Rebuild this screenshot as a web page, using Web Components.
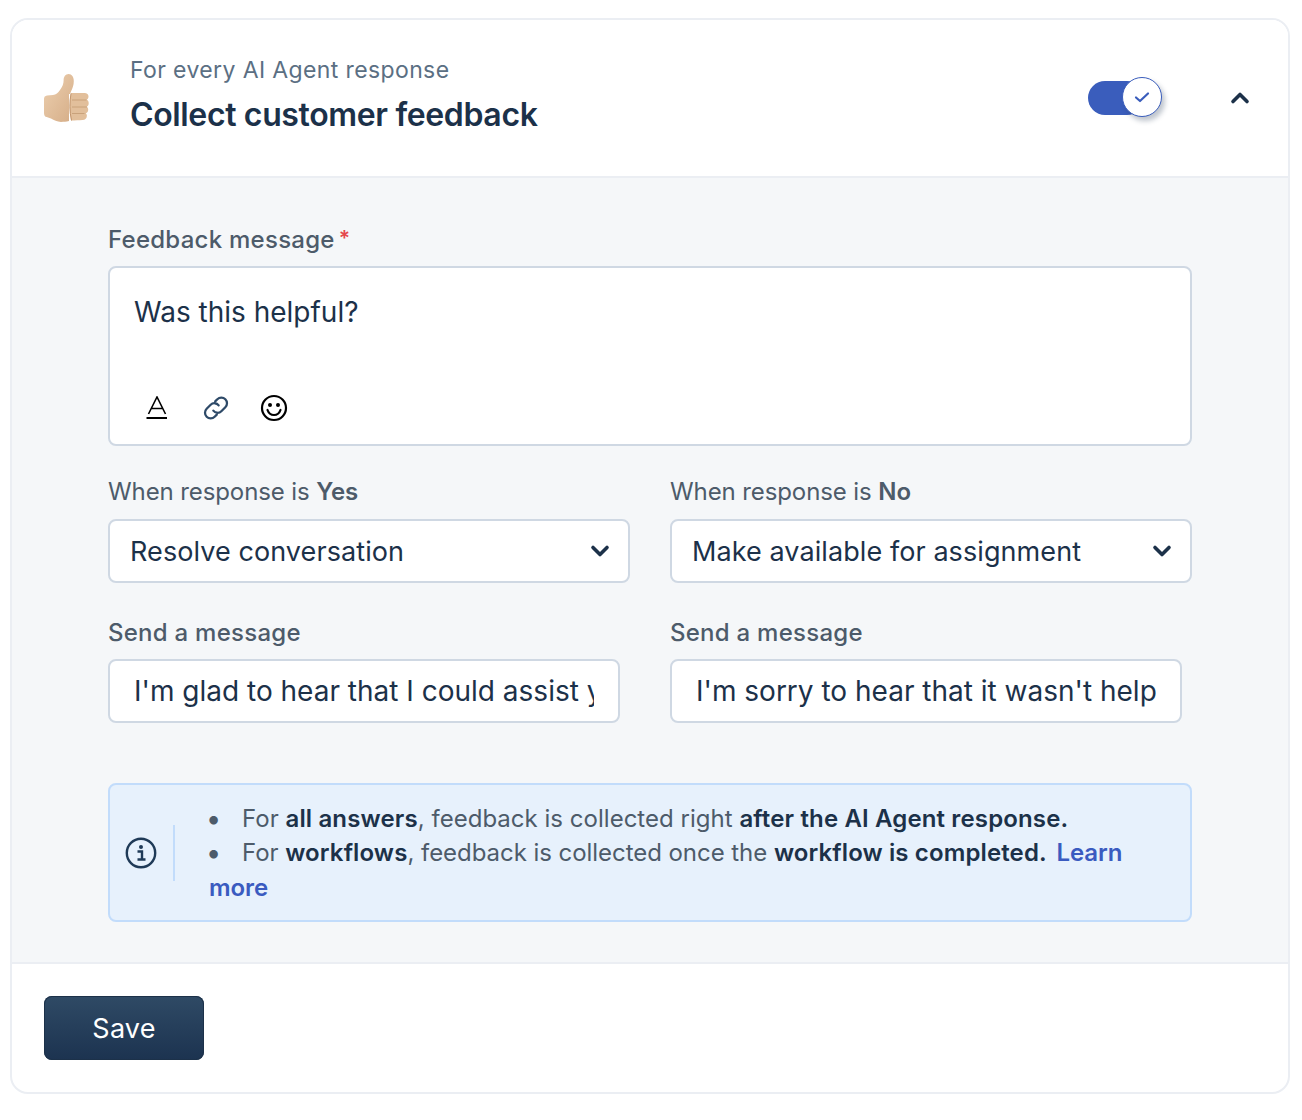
<!DOCTYPE html>
<html><head><meta charset="utf-8">
<style>
html,body{margin:0;padding:0;background:#fff}
body{padding:18px 12px 26px 10px;font-family:Inter,"Liberation Sans",sans-serif;color:#1c3149}
info-box li{display:block}
info-box li.w{letter-spacing:-.05px}
info-box li.w b{letter-spacing:.12px}
info-box li::before{content:"•";display:inline-block;width:36px;margin-left:-3px;color:#4d5b6a;font-size:27px;line-height:1;vertical-align:-1px}
info-box b{font-weight:600;color:#1c3149;letter-spacing:.14px}
info-box a{color:#3a5bc0;font-weight:600}
info-box a.l{margin-left:3px}
form-label b{font-weight:600}
</style></head><body>
<feedback-card>
  <card-header slot="header" sub="For every AI Agent response" title-text="Collect customer feedback"></card-header>

  <form-label required>Feedback message</form-label>
  <rich-box>Was this helpful?</rich-box>

  <two-col style="margin-top:29px">
    <div><form-label plain>When response is <b>Yes</b></form-label><select-box>Resolve conversation</select-box></div>
    <div><form-label plain>When response is <b>No</b></form-label><select-box>Make available for assignment</select-box></div>
  </two-col>
  <two-col style="margin-top:33px">
    <div><form-label tight>Send a message</form-label><text-box>I'm glad to hear that I could assist you.</text-box></div>
    <div><form-label tight>Send a message</form-label><text-box>I'm sorry to hear that it wasn't helpful.</text-box></div>
  </two-col>

  <info-box>
    <li>For <b>all answers</b>, feedback is collected right <b>after the AI Agent response.</b></li>
    <li class="w">For <b>workflows</b>, feedback is collected once the <b>workflow is completed.</b> <a class="l">Learn</a> <a>more</a></li>
  </info-box>

  <save-button slot="footer">Save</save-button>
</feedback-card>

<script>
function def(name, html){
  customElements.define(name, class extends HTMLElement{
    constructor(){super();this.attachShadow({mode:'open'}).innerHTML=typeof html==='function'?html(this):html;}
  });
}
def('feedback-card',`<style>
:host{display:block;width:1280px;box-sizing:border-box;border:2px solid #ebeef3;border-radius:18px;overflow:hidden;background:#fff}
.body{background:#f5f7f9;padding:44px 96px 40px 96px;height:784px;box-sizing:border-box}
.foot{border-top:2px solid #ebeef3;padding:32px}
</style><slot name="header"></slot><div class="body"><slot></slot></div><div class="foot"><slot name="footer"></slot></div>`);

customElements.define('card-header', class extends HTMLElement{
  connectedCallback(){
    if(this.shadowRoot) return;
    this.attachShadow({mode:'open'}).innerHTML=`<style>
:host{display:flex;align-items:center;height:156px;border-bottom:2px solid #ebeef3;box-sizing:content-box;background:#fff}
.thumb{width:48px;height:52px;margin-left:30px;flex:none;position:relative;top:1px}
.txt{margin-left:40px;flex:1;position:relative;top:-3px}
.sub{font-size:23px;line-height:34px;color:#5b6f83;letter-spacing:.38px}
.title{font-size:32px;line-height:44px;font-weight:600;color:#1c3149;margin-top:6px;letter-spacing:-.36px}
.sw{width:76px;height:40px;flex:none;position:relative;margin-right:65px;top:-1px}
.track{position:absolute;left:1px;top:4px;width:56px;height:34px;background:#3a5dbc;border-radius:17px}
.knob{position:absolute;left:35px;top:0;width:40px;height:40px;border-radius:50%;background:#fff;border:1.5px solid #3a5dbc;box-sizing:border-box;box-shadow:3px 4px 5px rgba(30,50,80,.28);display:flex;align-items:center;justify-content:center}
.chev{margin-right:36px;flex:none;display:flex}
</style>
<svg class="thumb" viewBox="0 0 48 52">
<defs><linearGradient id="g" x1="0" y1="0" x2="1" y2="1"><stop offset="0" stop-color="#edd0b0"/><stop offset="1" stop-color="#d5ad87"/></linearGradient></defs>
<path fill="url(#g)" d="M2 26c0-2 1-3.200 3-3.500l6-.6c3-.5 5-2 7-5 2.500-3.500 3.600-6.300 3.600-9.500 0-3.500 2-6.300 5-6.300 3.200 0 5.200 3 5.200 7 0 4-1.200 7.400-2.800 10.500l-1 2.500h-1v27c-3 .6-5 .8-8 .8-4 0-7-1.500-10-3.300-2-1-4-1.500-5.500-1.800C2.500 43 2 41.500 2 40z"/>
<path fill="#e2bf9b" d="M29 20h13.500c2.500 0 4 1.500 4 3.500 0 1.500-.7 2.700-1.800 3.300 1.300.6 2 1.800 2 3.400 0 1.700-.8 3-2 3.500 1 .7 1.500 1.800 1.500 3 0 1.700-1 3-2.300 3.500.7.700 1 1.500 1 2.500 0 2.400-1.700 4.300-4.400 4.300-3.500.3-7 .3-11.500.5-2-9-2-18 0-28z"/>
<path d="M30 27h14.500M30 34h15M30 40.500h12.500" stroke="#c9a27b" stroke-width="1" fill="none"/>
<path d="M29 20.500c-1.500 8-1.500 18 .5 27" stroke="#bd9068" stroke-width=".9" fill="none"/>
</svg>
<div class="txt"><div class="sub">${this.getAttribute('sub')}</div><div class="title">${this.getAttribute('title-text')}</div></div>
<div class="sw"><div class="track"></div><div class="knob"><svg width="16" height="16" viewBox="0 0 16 16"><path d="M2 8.500l4 3.500 8-7.500" fill="none" stroke="#3a5dbc" stroke-width="2.200" stroke-linecap="round" stroke-linejoin="round"/></svg></div></div>
<div class="chev"><svg width="24" height="24" viewBox="0 0 24 24"><path d="M5 15.500l7-7 7 7" fill="none" stroke="#1c3149" stroke-width="3.600" stroke-linecap="round" stroke-linejoin="round"/></svg></div>`;
  }
});

customElements.define('form-label', class extends HTMLElement{
  constructor(){super();
    const plain=this.hasAttribute('plain'), req=this.hasAttribute('required'), tight=this.hasAttribute('tight');
    this.attachShadow({mode:'open'}).innerHTML=`<style>
:host{display:block;font-size:24px;line-height:34px;height:34px;color:#4d5b6a;letter-spacing:${plain?'-.1px':'.26px'};font-weight:${plain?400:500};margin-bottom:${tight?9:10}px;white-space:nowrap}
.r{color:#e5484d;font-size:21px;margin-left:4px;font-weight:600;vertical-align:2px}
</style><slot></slot>${req?'<span class="r">*</span>':''}`;
  }
});

def('rich-box',`<style>
:host{display:block;height:180px;box-sizing:border-box;border:2px solid #cfd8e3;border-radius:8px;background:#fff;padding:26px 24px 0}
.t{font-size:28px;line-height:38px;color:#1c3149;height:76px;position:relative;top:-1px}
.tools{display:flex;align-items:center;gap:28px;margin:23px 0 0 11px;height:30px}
svg{display:block;flex:none}
</style><div class="t"><slot></slot></div>
<div class="tools">
<svg width="24" height="24" viewBox="0 0 24 24"><path d="M3.500 18L12 1l8.500 17M6.500 12.500h11" fill="none" stroke="#000" stroke-width="1.600"/><path d="M1.500 22H22" stroke="#000" stroke-width="2"/></svg>
<svg width="32" height="32" viewBox="0 0 24 24" style="margin-left:3px"><g fill="none" stroke="#2e4a68" stroke-width="1.700" stroke-linecap="round" stroke-linejoin="round"><path d="M10 14a4 4 0 0 0 6 .4l3-3a4.200 4.200 0 0 0-6-6l-1.600 1.600"/><path d="M14 10a4 4 0 0 0-6-.4l-3 3a4.200 4.200 0 0 0 6 6l1.600-1.600"/></g></svg>
<svg width="28" height="28" viewBox="0 0 28 28"><circle cx="14" cy="14" r="12" fill="none" stroke="#000" stroke-width="2.200"/><circle cx="10" cy="11" r="2"/><circle cx="18" cy="11" r="2"/><path d="M7.500 16c1.200 3.500 3.600 5 6.500 5s5.300-1.500 6.500-5" fill="none" stroke="#000" stroke-width="2.200" stroke-linecap="round"/></svg>
</div>`);

def('two-col',`<style>:host{display:grid;grid-template-columns:522px 522px;column-gap:40px}</style><slot></slot>`);

def('select-box',`<style>
:host{display:flex;align-items:center;justify-content:space-between;height:64px;box-sizing:border-box;border:2px solid #cfd8e3;border-radius:8px;background:#fff;padding:0 16px 0 20px;font-size:27px;color:#1c3149;letter-spacing:.08px;white-space:nowrap}
svg{flex:none}
</style><span><slot></slot></span><svg width="24" height="24" viewBox="0 0 24 24"><path d="M5 8.500l7 7 7-7" fill="none" stroke="#1c3149" stroke-width="3.600" stroke-linecap="round" stroke-linejoin="round"/></svg>`);

def('text-box',`<style>
:host{display:block;width:512px;height:64px;box-sizing:border-box;border:2px solid #cfd8e3;border-radius:8px;background:#fff;padding:0 24px 0 24px;font-size:28px;line-height:60px;color:#1c3149}
.c{overflow:hidden;white-space:nowrap;height:100%}
</style><div class="c"><slot></slot></div>`);

def('info-box',`<style>
:host{display:flex;align-items:center;margin-top:60px;height:139px;width:1084px;box-sizing:border-box;border:2px solid #c2dcfb;border-radius:8px;background:#e7f1fc;font-size:24px;line-height:34.500px;color:#4d5b6a;letter-spacing:.02px}
.ic{width:65px;flex:none;display:flex;align-items:center;height:56px;border-right:2px solid #c2dcfb;justify-content:center;box-sizing:border-box;padding-right:1px}
ul{margin:0;padding:2px 50px 0 34px;list-style:none;flex:1}
</style><div class="ic"><svg width="32" height="32" viewBox="0 0 32 32"><circle cx="16" cy="16" r="14.200" fill="none" stroke="#1f3a57" stroke-width="2.400"/><circle cx="16" cy="10" r="2" fill="#1f3a57"/><path d="M12.500 14.500H17V22M12.500 22.500h8" fill="none" stroke="#1f3a57" stroke-width="2.400"/></svg></div>
<ul><slot></slot></ul>`);

def('save-button',`<style>
:host{display:flex;align-items:center;justify-content:center;width:160px;height:64px;box-sizing:border-box;border-radius:8px;background:linear-gradient(#2f4a65,#1c3350);box-shadow:inset 0 0 0 1px #1c3149;color:#fff;font-size:27px;letter-spacing:.2px}
</style><slot></slot>`);
</script>
</body></html>
